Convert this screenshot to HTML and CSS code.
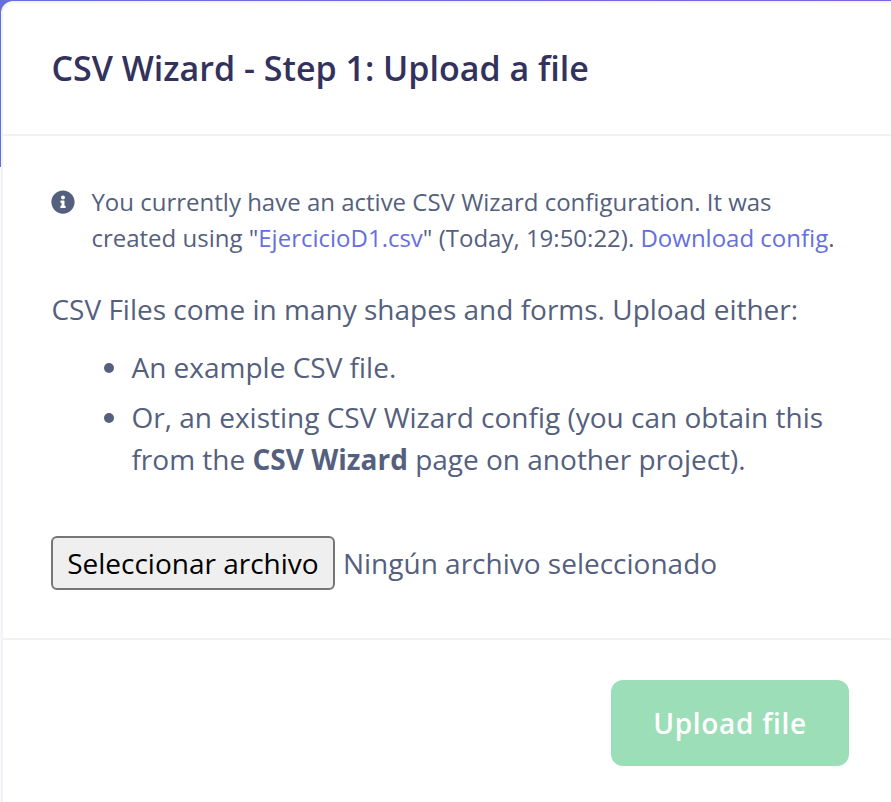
FILE: index.html
```html
<!DOCTYPE html>
<html lang="en">
<head>
<meta charset="utf-8">
<title>CSV Wizard</title>
<link rel="stylesheet" href="styles.css">
</head>
<body>
<main class="card">
  <header class="card-header"><h1>CSV Wizard - Step 1: Upload a file</h1></header>
  <section class="card-body">
    <div class="notice">
      <svg class="info" viewBox="0 0 512 512" aria-hidden="true"><path fill="currentColor" d="M256 8C119 8 8 119 8 256s111 248 248 248 248-111 248-248S393 8 256 8zm0 110c23 0 42 19 42 42s-19 42-42 42-42-19-42-42 19-42 42-42zm56 254c0 7-5 12-12 12h-88c-7 0-12-5-12-12v-24c0-7 5-12 12-12h12v-64h-12c-7 0-12-5-12-12v-24c0-7 5-12 12-12h64c7 0 12 5 12 12v100h12c7 0 12 5 12 12v24z"/></svg>
      <p>You currently have an active CSV Wizard configuration. It was<br>created using "<a>EjercicioD1.csv</a>" (Today, 19:50:22). <a>Download config</a>.</p>
    </div>
    <p class="intro">CSV Files come in many shapes and forms. Upload either:</p>
    <ul>
      <li>An example CSV file.</li>
      <li>Or, an existing CSV Wizard config (you can obtain this<br>from the <strong>CSV Wizard</strong> page on another project).</li>
    </ul>
    <div class="file-row"><button class="choose" type="button">Seleccionar archivo</button><span>Ningún archivo seleccionado</span></div>
  </section>
  <footer class="card-footer"><button class="upload" type="button">Upload file</button></footer>
</main>
</body>
</html>
```
FILE: styles.css
```css
* { box-sizing: border-box; }
body {
  margin: 0;
  height: 802px;
  overflow: hidden;
  background:
    linear-gradient(90deg, #646fde, #7e62df) 0 0 / 100% 167px no-repeat,
    #f8f9fe;
  font-family: "Open Sans", sans-serif;
  color: #555f7e;
}
.card {
  width: 910px;
  height: 820px;
  margin: 1px 0 0 1px;
  border: 2px solid #f2f2f7;
  border-radius: 12px;
  background: #fff;
}
.card-header {
  height: 133px;
  padding: 40px 48.45px 0;
  border-bottom: 2px solid #f2f2f2;
}
h1 {
  margin: 0;
  font-size: 34px;
  line-height: 50px;
  font-weight: 600;
  color: #32325d;
  white-space: nowrap;
}
.card-body {
  height: 504px;
  padding: 48px 48.45px 0;
  border-bottom: 2px solid #f2f2f2;
  font-size: 28px;
  line-height: 42px;
  white-space: nowrap;
}
p { margin: 0; }
.notice { display: flex; gap: 16px; font-size: 24px; line-height: 36px; }
.info { width: 24px; height: 24px; margin-top: 6px; flex: none; }
a { color: #6570dc; }
.intro { margin-top: 32px; }
ul { margin: 16px 0 0; padding-left: 80px; }
li + li { margin-top: 8px; }
.file-row { display: flex; align-items: center; gap: 7.5px; margin-top: 56px; }
.choose {
  width: 284px;
  height: 54px;
  padding: 0 1px 0 0;
  border: 2px solid #767676;
  border-radius: 6px;
  background: #efefef;
  color: #000;
  font: 28px "Open Sans", sans-serif;
}
.card-footer { display: flex; justify-content: flex-end; padding: 40px 60px 0; }
.upload {
  width: 238px;
  height: 86px;
  border: 0;
  border-radius: 12px;
  background: #9cdeb8;
  color: #fff;
  font: 600 28px "Open Sans", sans-serif;
  letter-spacing: 0.025em;
}
```
